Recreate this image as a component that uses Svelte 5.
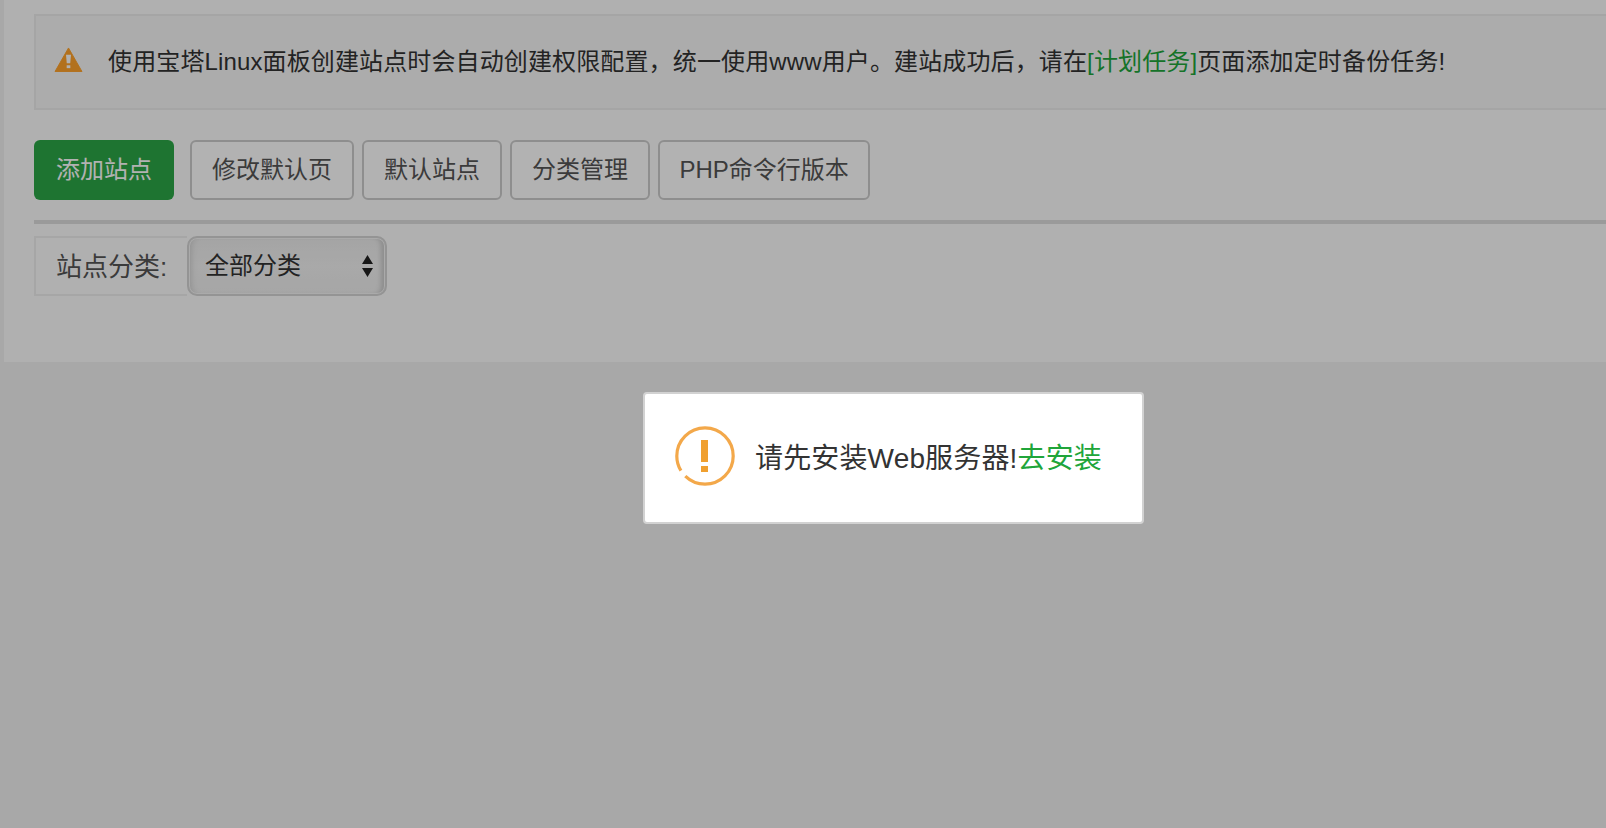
<script>
  const buttons = ['修改默认页', '默认站点', '分类管理', 'PHP命令行版本'];
</script>

<div class="page">
  <div class="panel">
    <div class="alert">
      <svg class="warn" width="29" height="25" viewBox="0 0 30 26">
        <path d="M15 1 L29 25.5 H1 Z" fill="#ffa22b" stroke="#ffa22b" stroke-linejoin="round" />
        <path d="M12.4 8 H17.6 L16.8 17 H13.2 Z" fill="#fff" />
        <rect x="13.1" y="19" width="3.8" height="3" fill="#fff" />
      </svg>
      <p>使用宝塔Linux面板创建站点时会自动创建权限配置，统一使用www用户。建站成功后，请在<a href="#task">[计划任务]</a>页面添加定时备份任务!</p>
    </div>

    <div class="toolbar">
      <button class="primary">添加站点</button>
      {#each buttons as label}
        <button>{label}</button>
      {/each}
    </div>

    <div class="filter">
      <span class="addon">站点分类:</span>
      <div class="select">
        <span>全部分类</span>
        <svg width="11" height="22" viewBox="0 0 11 22">
          <path d="M5.5 0 L11 9 H0 Z M0 13 H11 L5.5 22 Z" fill="#222" />
        </svg>
      </div>
    </div>
  </div>
</div>

<div class="shade"></div>

<div class="dialog">
  <svg class="tip" width="60" height="60" viewBox="0 0 60 60">
    <circle cx="30" cy="30" r="28.2" fill="none" stroke="#f3a84a" stroke-width="3.2" stroke-dasharray="170 7" stroke-dashoffset="-73" />
    <rect x="26" y="14" width="7" height="22" fill="#f0a030" />
    <rect x="26" y="40" width="7" height="6" fill="#f0a030" />
  </svg>
  <p>请先安装Web服务器!<a href="#install">去安装</a></p>
</div>

<style>
  :global(body) {
    background: #f1f1f1;
    overflow: hidden;
    font-family: "Liberation Sans", "Noto Sans CJK SC", sans-serif;
  }

  .page {
    height: 828px;
    padding-left: 4px;
    box-sizing: border-box;
  }

  .panel {
    height: 362px;
    box-sizing: border-box;
    background: #fdfdfd;
    padding: 14px 0 0 30px;
  }

  .alert {
    height: 96px;
    box-sizing: border-box;
    border: 2px solid #ececec;
    border-right: 0;
    background: #f7f7f7;
    display: flex;
    align-items: center;
    padding-left: 18px;
    margin-bottom: 30px;
  }

  .alert p {
    margin: 0 0 5px 25px;
    font-size: 24px;
    letter-spacing: 0.13px;
    color: #333;
    white-space: nowrap;
  }

  .alert a {
    color: #20a53a;
    text-decoration: none;
  }

  .warn {
    flex: none;
    margin-bottom: 5px;
  }

  .toolbar {
    display: flex;
    gap: 8px;
    padding-bottom: 20px;
    border-bottom: 4px solid #ddd;
  }

  button {
    height: 60px;
    padding: 0 20px 5px;
    border: 2px solid #ccc;
    border-radius: 6px;
    background: #fff;
    color: #555;
    font: 24px "Liberation Sans", "Noto Sans CJK SC", sans-serif;
  }

  button:last-child {
    padding: 0 19.5px 5px;
  }

  .primary {
    padding: 0 22px 5px;
    margin-right: 8px;
    border: 0;
    background: #2ca747;
    color: #fff;
  }

  .filter {
    display: flex;
    margin-top: 12px;
    height: 60px;
  }

  .addon {
    width: 153px;
    box-sizing: border-box;
    border: 2px solid #eee;
    border-right: 0;
    padding-left: 20px;
    font-size: 26px;
    line-height: 58px;
    color: #555;
    white-space: nowrap;
  }

  .select {
    width: 200px;
    box-sizing: border-box;
    display: flex;
    align-items: center;
    justify-content: space-between;
    padding: 0 12px 5px 16px;
    border: 2px solid #d4d4d4;
    border-radius: 10px;
    font-size: 24px;
    color: #333;
    background: linear-gradient(#ececec, #f2f2f2 50%, #eee);
    box-shadow: inset 0 0 0 1px #f4f4f4, inset 6px 0 6px -4px #ccc, inset -7px 0 5px -3px #c8c8c8;
  }

  .select svg {
    margin-top: 5px;
  }

  .shade {
    position: fixed;
    inset: 0;
    background: rgba(0, 0, 0, 0.3);
  }

  .dialog {
    position: fixed;
    left: 643px;
    top: 392px;
    width: 501px;
    height: 132px;
    box-sizing: border-box;
    display: flex;
    align-items: center;
    gap: 20px;
    padding-left: 30px;
    border: 2px solid #d2d2d2;
    border-radius: 4px;
    background: #fff;
  }

  .tip {
    flex: none;
    margin-bottom: 4px;
  }

  .dialog p {
    margin: 0 0 5px;
    font-size: 28px;
    letter-spacing: 0.15px;
    color: #333;
    white-space: nowrap;
  }

  .dialog a {
    color: #20a53a;
    text-decoration: none;
  }
</style>
